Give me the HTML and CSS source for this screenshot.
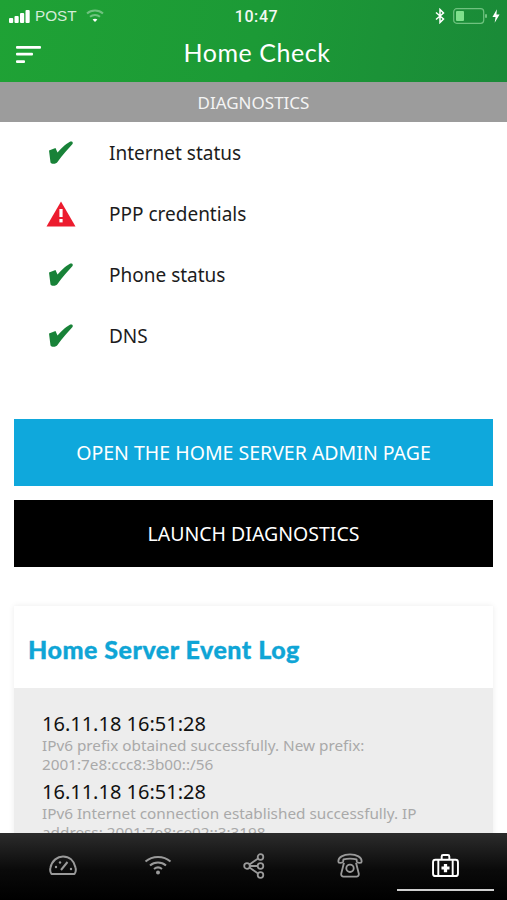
FILE: index.html
```html
<!DOCTYPE html>
<html lang="en">
<head>
    <meta charset="UTF-8">
    <meta name="viewport" content="width=device-width, initial-scale=1.0">
    <title>Home Check</title>
    <link rel="stylesheet" href="styles.css">
</head>
<body>
<div class="app">
    <header class="top">
        <div class="status">
            <div class="status-left">
                <svg class="signal" width="21" height="13" viewBox="0 0 21 13">
                    <rect x="0" y="8" width="4.2" height="5" rx="1"/>
                    <rect x="5.5" y="6" width="4.2" height="7" rx="1"/>
                    <rect x="11" y="3" width="4.2" height="10" rx="1"/>
                    <rect x="16.5" y="0" width="4.2" height="13" rx="1"/>
                </svg>
                <span class="carrier">POST</span>
                <svg class="wifi" width="18" height="14" viewBox="0 0 18 14" fill="none" stroke="#6fc27f" stroke-width="2">
                    <path d="M1 4.5C5.5 0.5 12.5 0.5 17 4.5"/>
                    <path d="M4 7.8C6.8 5.4 11.2 5.4 14 7.8"/>
                    <path d="M9 13L6.6 10.4C8 9.4 10 9.4 11.4 10.4Z" fill="#fff" stroke="none"/>
                </svg>
            </div>
            <div class="clock">10:47</div>
            <div class="status-right">
                <svg width="10" height="16" viewBox="0 0 10 16" fill="none" stroke="#fff" stroke-width="1.5">
                    <path d="M1 4.5L8.5 11L5 14.5V1.5L8.5 5L1 11.5"/>
                </svg>
                <svg class="battery" width="35" height="16" viewBox="0 0 35 16">
                    <rect x="0.7" y="0.7" width="30" height="14.6" rx="3" fill="none" stroke="#6fc27f" stroke-width="1.2"/>
                    <rect x="3" y="3" width="8" height="10" rx="1" fill="#7fe08c"/>
                    <rect x="32" y="6" width="2" height="4" rx="1" fill="#6fc27f"/>
                </svg>
                <svg width="8" height="14" viewBox="0 0 9 15">
                    <path d="M5.5 0L0.5 8.5H4L3 15L8.5 5.8H5Z" fill="#fff"/>
                </svg>
            </div>
        </div>
        <div class="titlebar">
            <svg class="menu" width="25" height="17" viewBox="0 0 25 17">
                <rect x="0" y="0" width="25" height="2.8" rx="1"/>
                <rect x="0" y="6.8" width="17" height="2.8" rx="1"/>
                <rect x="0" y="14.2" width="9" height="2.8" rx="1"/>
            </svg>
            <h1>Home Check</h1>
        </div>
    </header>

    <div class="section-bar">DIAGNOSTICS</div>

    <main class="content">
        <ul class="checks">
            <li>
                <svg class="mark" width="25" height="23" viewBox="0 0 25 23"><path class="tick" d="M0.5 9.5L7 7L9 11.5C12 8 17 3 21 1C23 0 25 1 24 3C20 7.5 14 14 9 21C8 23 3 23.5 2 21.5Z"/></svg>
                <span>Internet status</span>
            </li>
            <li>
                <svg class="mark" width="30" height="26" viewBox="0 0 30 26"><path d="M15 0.5L29.5 25.5H0.5Z" fill="#ec1c2e"/><rect x="13.4" y="8" width="3.2" height="8" fill="#fff"/><rect x="13.4" y="18" width="3.2" height="3.4" fill="#fff"/></svg>
                <span>PPP credentials</span>
            </li>
            <li>
                <svg class="mark" width="25" height="23" viewBox="0 0 25 23"><path class="tick" d="M0.5 9.5L7 7L9 11.5C12 8 17 3 21 1C23 0 25 1 24 3C20 7.5 14 14 9 21C8 23 3 23.5 2 21.5Z"/></svg>
                <span>Phone status</span>
            </li>
            <li>
                <svg class="mark" width="25" height="23" viewBox="0 0 25 23"><path class="tick" d="M0.5 9.5L7 7L9 11.5C12 8 17 3 21 1C23 0 25 1 24 3C20 7.5 14 14 9 21C8 23 3 23.5 2 21.5Z"/></svg>
                <span>DNS</span>
            </li>
        </ul>

        <div class="actions">
            <button class="btn btn-blue">OPEN THE HOME SERVER ADMIN PAGE</button>
            <button class="btn btn-black">LAUNCH DIAGNOSTICS</button>
        </div>

        <section class="card">
            <h2>Home Server Event Log</h2>
            <div class="log">
                <div class="log-item">
                    <div class="log-date">16.11.18 16:51:28</div>
                    <div class="log-text">IPv6 prefix obtained successfully. New prefix: 2001:7e8:ccc8:3b00::/56</div>
                </div>
                <div class="log-item">
                    <div class="log-date">16.11.18 16:51:28</div>
                    <div class="log-text">IPv6 Internet connection established successfully. IP address: 2001:7e8:ce02::3:3198</div>
                </div>
            </div>
        </section>
    </main>

    <nav class="tabs">
        <a class="tab">
            <svg width="28" height="20" viewBox="0 0 28 20" fill="none" stroke="#9a9a9a" stroke-width="2">
                <path d="M2.5 19C1 17 1 14.5 1.5 12.5C3 5.5 8.5 1.5 14 1.5C20 1.5 25 5.5 26.5 12.5C27 14.5 27 17 25.5 19Z" stroke-linejoin="round"/>
                <path d="M12 15L18.5 7"/>
                <circle cx="7" cy="12" r="1.2" fill="#9a9a9a" stroke="none"/>
                <circle cx="11" cy="7.5" r="1.2" fill="#9a9a9a" stroke="none"/>
                <circle cx="22" cy="14" r="1.2" fill="#9a9a9a" stroke="none"/>
            </svg>
        </a>
        <a class="tab">
            <svg width="28" height="20" viewBox="0 0 28 20" fill="none" stroke="#9a9a9a" stroke-width="2">
                <path d="M1.5 6.5C8.5 0.5 19.5 0.5 26.5 6.5"/>
                <path d="M6 10.5C10.5 6.5 17.5 6.5 22 10.5"/>
                <path d="M10 14C12.5 12 15.5 12 18 14"/>
                <circle cx="14" cy="17.5" r="2" fill="#9a9a9a" stroke="none"/>
            </svg>
        </a>
        <a class="tab tab-share">
            <svg width="22" height="26" viewBox="0 0 22 26" fill="none" stroke="#9a9a9a" stroke-width="1.8">
                <circle cx="4" cy="13" r="2.8"/>
                <circle cx="17.5" cy="4" r="2.8"/>
                <circle cx="17.5" cy="13" r="2.8"/>
                <circle cx="17.5" cy="22" r="2.8"/>
                <path d="M6.5 11.5L15 5.5M7 13H14.7M6.5 14.5L15 20.5"/>
            </svg>
        </a>
        <a class="tab tab-phone">
            <svg width="26" height="25" viewBox="0 0 28 26" fill="none" stroke="#9a9a9a" stroke-width="2">
                <path d="M1.5 9C1 4 7 1 14 1C21 1 27 4 26.5 9C26.3 10.5 22 10.5 21.5 9L21 6.5C17 5.5 11 5.5 7 6.5L6.5 9C6 10.5 1.7 10.5 1.5 9Z" stroke-linejoin="round"/>
                <path d="M7.5 10L4.5 22C4.3 24 5.5 25 7 25H21C22.5 25 23.7 24 23.5 22L20.5 10"/>
                <circle cx="14" cy="16" r="4"/>
            </svg>
        </a>
        <a class="tab tab-on">
            <svg width="27" height="23" viewBox="0 0 28 24" fill="none" stroke="#fff" stroke-width="2">
                <path d="M10 6V2.5C10 1.7 10.7 1 11.5 1H16.5C17.3 1 18 1.7 18 2.5V6"/>
                <rect x="1" y="6" width="26" height="17" rx="2.5"/>
                <path d="M6.5 6V23M21.5 6V23"/>
                <path d="M12.3 10.5H15.7V13H18.2V16.3H15.7V19H12.3V16.3H9.8V13H12.3Z" fill="#fff" stroke="none"/>
            </svg>
        </a>
    </nav>
</div>
</body>
</html>
```

FILE: styles.css
```css
/* Home Check screen */
* {
    box-sizing: border-box;
}
body {
    margin: 0;
    font-family: "Noto Sans", Arial, sans-serif;
    background: #fff;
}
.app {
    width: 507px;
    height: 900px;
    display: flex;
    flex-direction: column;
    overflow: hidden;
}

/* green header */
.top {
    height: 82px;
    background: linear-gradient(100deg, #1fa235 0%, #1c9a36 50%, #1a8a38 100%);
    color: #fff;
    flex-shrink: 0;
}
.status {
    height: 30px;
    padding: 2px 7px 0 9px;
    display: grid;
    grid-template-columns: 1fr auto 1fr;
    align-items: center;
}
.status-left {
    display: flex;
    align-items: center;
    gap: 5px;
}
.signal {
    fill: #fff;
}
.carrier {
    font-family: "Liberation Sans", Arial, sans-serif;
    font-size: 15.3px;
    color: #d4ecd8;
}
.wifi {
    margin-left: 4px;
}
.clock {
    font-family: Roboto, sans-serif;
    font-size: 16px;
    font-weight: 500;
    color: #f2f8f2;
    letter-spacing: 0.6px;
    margin-left: 4px;
}
.status-right {
    display: flex;
    justify-content: flex-end;
    align-items: center;
    gap: 4px;
}
.battery {
    margin-left: 4px;
}
.titlebar {
    height: 52px;
    padding: 0 0 8px 16px;
    display: flex;
    align-items: center;
}
.menu {
    fill: #fff;
    margin-top: 4px;
}
.titlebar h1 {
    flex: 1;
    margin: 0 34px 0 0;
    text-align: center;
    font-family: Lato, sans-serif;
    font-weight: 400;
    font-size: 25px;
    letter-spacing: 0.55px;
}

.section-bar {
    height: 40px;
    flex-shrink: 0;
    background: #9c9c9c;
    color: #f4f4f4;
    font-size: 17px;
    line-height: 42px;
    text-align: center;
}

.content {
    flex: 1;
    min-height: 0;
    overflow: hidden;
    padding: 0 14px;
}

/* status list */
.checks {
    list-style: none;
    margin: 0;
    padding: 0 0 0 32px;
}
.checks li {
    height: 61px;
    display: flex;
    align-items: center;
    font-size: 19px;
    color: #1c1c1c;
}
.checks li span {
    margin-left: 33px;
    padding-top: 1px;
}
.mark {
    flex: none;
    width: 30px;
}
.tick {
    fill: #188238;
}

.actions {
    margin-top: 53px;
    display: flex;
    flex-direction: column;
    gap: 14px;
}
.btn {
    height: 67px;
    border: none;
    color: #fff;
    font-family: "Noto Sans", Arial, sans-serif;
    font-size: 19.5px;
    padding: 0;
}
.btn-blue {
    background: #0fa8dc;
}
.btn-black {
    background: #000;
}

/* event log */
.card {
    margin-top: 39px;
    box-shadow: 0 0 6px rgba(0, 0, 0, 0.08);
}
.card h2 {
    margin: 0;
    height: 82px;
    padding: 3px 0 0 14px;
    display: flex;
    align-items: center;
    font-family: Lato, sans-serif;
    font-weight: 900;
    font-size: 25px;
    letter-spacing: 0.5px;
    -webkit-text-stroke: 0.35px #0fa5d6;
    color: #0fa5d6;
}
.log {
    background: #ededed;
    padding: 24px 28px;
    min-height: 200px;
}
.log-item {
    margin-bottom: 6px;
}
.log-date {
    font-size: 20px;
    line-height: 24px;
    color: #111;
}
.log-text {
    font-size: 15.3px;
    line-height: 19px;
    color: #a9a9a9;
}

/* bottom tabs */
.tabs {
    height: 67px;
    flex-shrink: 0;
    background: linear-gradient(#2c2c2c, #0a0a0a 55%, #000);
    display: grid;
    grid-template-columns: 94px 96px 96px 96px 1fr;
    padding-left: 15px;
}
.tab {
    display: flex;
    justify-content: center;
    padding: 22px 0 0 1px;
}
.tab-share,
.tab-phone {
    padding-top: 20px;
}
.tab-on {
    padding: 21px 13px 0 0;
    position: relative;
}
.tab-on::after {
    content: "";
    position: absolute;
    left: 0;
    right: 13px;
    bottom: 9px;
    height: 2px;
    background: #cfcfcf;
}
```
